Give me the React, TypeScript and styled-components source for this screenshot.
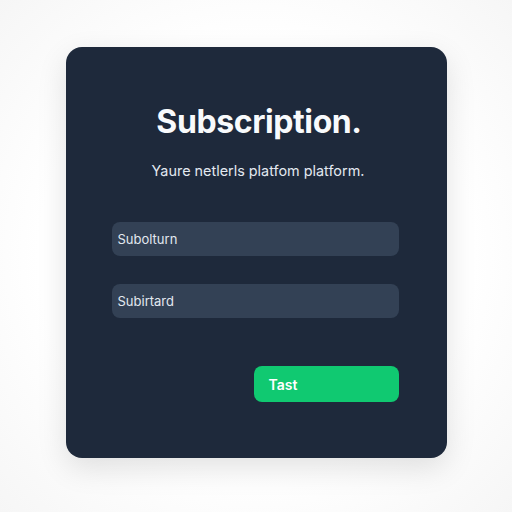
import * as React from "react";
import styled, { createGlobalStyle } from "styled-components";

const Global = createGlobalStyle`
  html, body {
    margin: 0;
    padding: 0;
    background: #ffffff;
  }
  body {
    font-family: Inter, "Liberation Sans", sans-serif;
  }
`;

export default function App() {
  return (
    <>
      <Global />
      <Page>
        <Card>
          <Title>Subscription.</Title>
          <Subtitle>Yaure netlerls platfom platform.</Subtitle>
          <Fields>
            <Field>Subolturn</Field>
            <Field>Subirtard</Field>
          </Fields>
          <Actions>
            <Button>Tast</Button>
          </Actions>
        </Card>
      </Page>
    </>
  );
}

const Page = styled.div`
  width: 512px;
  height: 512px;
  display: flex;
  justify-content: center;
  padding-top: 47px;
  box-sizing: border-box;
  background: radial-gradient(circle at 50% 50%, #ffffff 60%, #f6f6f6 100%);
`;

const Card = styled.div`
  width: 381px;
  height: 411px;
  box-sizing: border-box;
  background: #1e293b;
  border-radius: 16px;
  box-shadow: 0 10px 30px rgba(0, 0, 0, 0.12);
  padding: 55px 48px 0 46px;
  display: flex;
  flex-direction: column;
`;

const Title = styled.h1`
  margin: 0;
  text-align: center;
  color: #f8fafc;
  font-size: 32px;
  font-weight: 700;
  letter-spacing: -0.4px;
  line-height: 40px;
  padding-left: 8px;
`;

const Subtitle = styled.p`
  margin: 19px 0 0;
  text-align: center;
  color: #e2e8f0;
  font-size: 14.4px;
  line-height: 20px;
  padding-left: 6px;
`;

const Fields = styled.div`
  margin-top: 41px;
  display: flex;
  flex-direction: column;
  gap: 28px;
`;

const Field = styled.div`
  height: 34px;
  border-radius: 8px;
  background: #334155;
  color: #e2e8f0;
  font-size: 13px;
  display: flex;
  align-items: center;
  padding-left: 6px;
`;

const Actions = styled.div`
  margin-top: 48px;
  display: flex;
  justify-content: flex-end;
`;

const Button = styled.button`
  width: 145px;
  height: 36px;
  border: none;
  border-radius: 8px;
  background: #10c971;
  color: #ffffff;
  font-family: Inter, "Liberation Sans", sans-serif;
  font-size: 14px;
  font-weight: 600;
  text-align: left;
  padding-left: 15px;
`;
